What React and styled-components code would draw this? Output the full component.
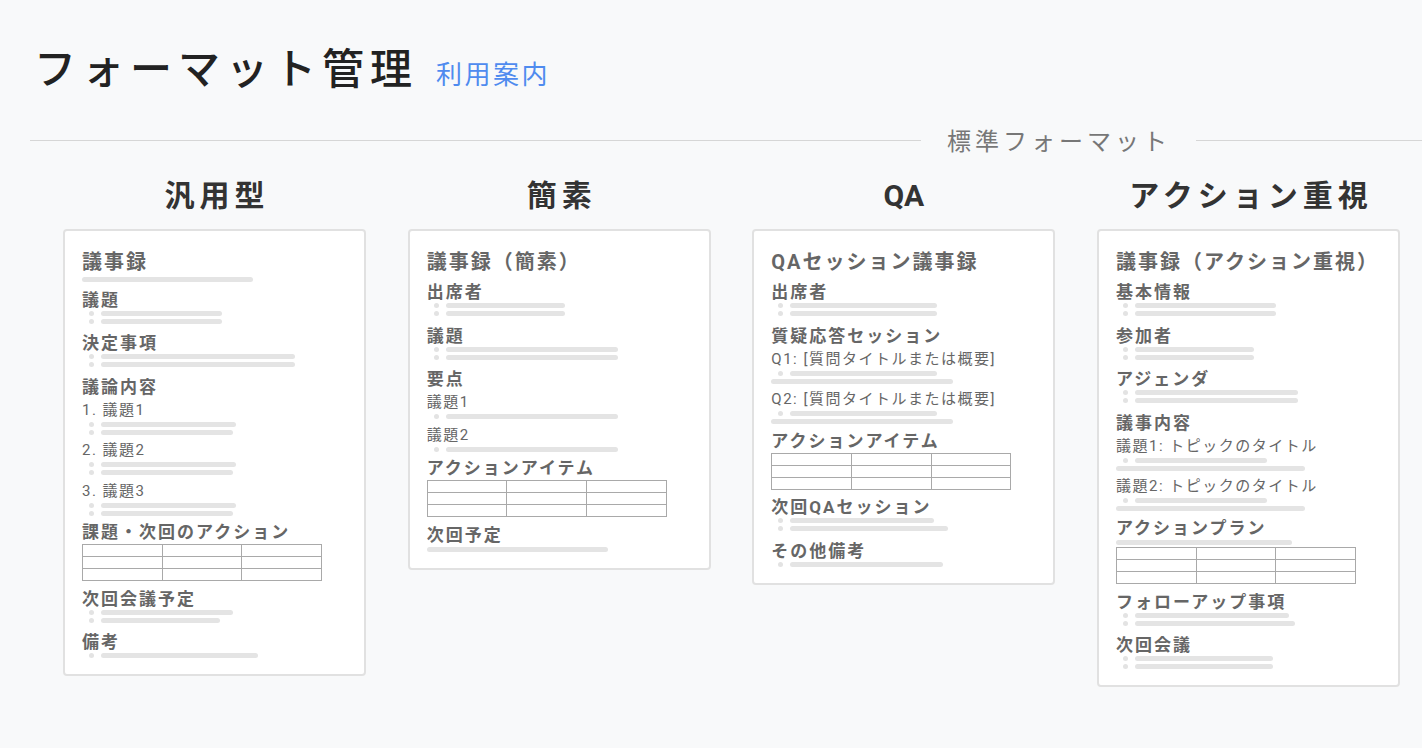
import React from "react";
import styled, { createGlobalStyle } from "styled-components";

const GlobalStyle = createGlobalStyle`
  html, body {
    margin: 0;
    padding: 0;
    background: #f8f9fa;
  }
  body {
    font-family: Roboto, "Noto Sans CJK JP", sans-serif;
    color: #222;
  }
  * {
    box-sizing: border-box;
  }
`;

const Page = styled.div`
  width: 1422px;
  height: 748px;
  overflow: hidden;
  padding-top: 41px;
`;

const TitleRow = styled.div`
  display: flex;
  align-items: baseline;
  gap: 18px;
  padding-left: 34px;
`;

const PageTitle = styled.h1`
  margin: 0;
  font-family: "Noto Sans CJK JP", sans-serif;
  font-size: 42px;
  line-height: 50px;
  font-weight: 500;
  letter-spacing: 6px;
  color: #222;
`;

const HelpLink = styled.a`
  font-family: "Noto Sans CJK JP", sans-serif;
  font-size: 26px;
  letter-spacing: 2.5px;
  color: #4f8bef;
  text-decoration: none;
  cursor: pointer;
`;

const Divider = styled.div`
  display: flex;
  align-items: center;
  margin-top: 34px;
  padding-left: 30px;
`;

const Rule = styled.div`
  height: 1px;
  background: #d6d6d6;
  flex: ${(p) => (p.$fixed ? "none" : "1")};
  width: ${(p) => (p.$fixed ? `${p.$fixed}px` : "auto")};
`;

const DividerLabel = styled.span`
  font-family: "Noto Sans CJK JP", sans-serif;
  font-size: 24px;
  line-height: 30px;
  letter-spacing: 4px;
  color: #777;
  padding: 0 25px 0 26px;
`;

const Columns = styled.div`
  display: grid;
  grid-template-columns: repeat(4, 303px);
  column-gap: 41.67px;
  align-items: start;
  margin-top: 23px;
  padding-left: 63px;
`;

const Column = styled.section`
  display: flex;
  flex-direction: column;
`;

const ColumnTitle = styled.h2`
  margin: 0 0 14.5px;
  padding-left: ${(p) => (p.$latin ? 0 : 5)}px;
  font-size: 30px;
  line-height: 36px;
  font-weight: 700;
  letter-spacing: ${(p) => (p.$latin ? 0 : 5)}px;
  text-align: center;
  color: #333;
`;

const Card = styled.div`
  background: #fff;
  border: 2px solid #e1e1e1;
  border-radius: 4px;
  padding: 18px 17px 16px;
`;

const CardTitle = styled.h3`
  margin: 0 0 ${(p) => (p.$withBar ? "2.7px" : "6.5px")};
  font-size: 20px;
  line-height: 26px;
  font-weight: 700;
  letter-spacing: 2px;
  color: #666;
  white-space: nowrap;
`;

const Block = styled.div`
  margin-bottom: ${(p) => p.$gap}px;
  &:last-child {
    margin-bottom: 0;
  }
`;

const Heading = styled.h4`
  margin: 0;
  font-size: 17px;
  line-height: 22px;
  font-weight: 700;
  letter-spacing: 2px;
  color: #666;
  white-space: nowrap;
`;

const SubText = styled.div`
  margin-top: ${(p) => (p.$first ? 2 : 5.5)}px;
  font-size: 15px;
  line-height: 20px;
  letter-spacing: 1.5px;
  color: #666;
  white-space: nowrap;
`;

const BarList = styled.ul`
  list-style: none;
  margin: ${(p) => p.$top || 0}px 0 ${(p) => p.$bottom || 0}px;
  padding: 0;
  display: flex;
  flex-direction: column;
  gap: 3px;
`;

const BarItem = styled.li`
  display: flex;
  align-items: center;
  gap: 7px;
  height: 5px;
  padding-left: ${(p) => (p.$plain ? 0 : 7)}px;
`;

const Dot = styled.span`
  width: 5px;
  height: 5px;
  border-radius: 50%;
  background: #e3e3e3;
  flex: none;
`;

const Bar = styled.span`
  height: 5px;
  border-radius: 3px;
  background: #e4e4e4;
  flex: none;
`;

const ActionTable = styled.div`
  display: grid;
  grid-template-columns: repeat(3, 1fr);
  grid-auto-rows: 12px;
  width: 240px;
  margin-top: ${(p) => p.$top}px;
  border-top: 1px solid #a9a9a9;
  border-left: 1px solid #a9a9a9;
`;

const Cell = styled.div`
  border-right: 1px solid #a9a9a9;
  border-bottom: 1px solid #a9a9a9;
`;

const formats = [
  {
    name: "汎用型",
    title: "議事録",
    titleBar: 171,
    sections: [
      { heading: "議題", bars: [121, 121] },
      { heading: "決定事項", bars: [194, 194] },
      {
        heading: "議論内容",
        subs: [
          { text: "1. 議題1", bars: [135, 132] },
          { text: "2. 議題2", bars: [135, 132] },
          { text: "3. 議題3", bars: [135, 132] },
        ],
      },
      { heading: "課題・次回のアクション", table: true },
      { heading: "次回会議予定", bars: [132, 119] },
      { heading: "備考", bars: [157] },
    ],
  },
  {
    name: "簡素",
    title: "議事録（簡素）",
    sections: [
      { heading: "出席者", bars: [119, 119] },
      { heading: "議題", bars: [172, 172] },
      {
        heading: "要点",
        subs: [
          { text: "議題1", bars: [172] },
          { text: "議題2", bars: [172] },
        ],
      },
      { heading: "アクションアイテム", table: true },
      { heading: "次回予定", lead: 181 },
    ],
  },
  {
    name: "QA",
    title: "QAセッション議事録",
    sections: [
      { heading: "出席者", bars: [147, 147] },
      {
        heading: "質疑応答セッション",
        subs: [
          { text: "Q1: [質問タイトルまたは概要]", bars: [147], plain: 182 },
          { text: "Q2: [質問タイトルまたは概要]", bars: [147], plain: 182 },
        ],
      },
      { heading: "アクションアイテム", table: true },
      { heading: "次回QAセッション", bars: [144, 158] },
      { heading: "その他備考", bars: [153] },
    ],
  },
  {
    name: "アクション重視",
    title: "議事録（アクション重視）",
    sections: [
      { heading: "基本情報", bars: [141, 141] },
      { heading: "参加者", bars: [119, 119] },
      { heading: "アジェンダ", bars: [163, 163] },
      {
        heading: "議事内容",
        subs: [
          { text: "議題1: トピックのタイトル", bars: [132], plain: 189 },
          { text: "議題2: トピックのタイトル", bars: [132], plain: 189 },
        ],
      },
      { heading: "アクションプラン", lead: 176, table: true },
      { heading: "フォローアップ事項", bars: [154, 160] },
      { heading: "次回会議", bars: [138, 138] },
    ],
  },
];

function Bullets({ bars, plain, top, bottom }) {
  return (
    <BarList $top={top} $bottom={bottom}>
      {bars.map((w, i) => (
        <BarItem key={i}>
          <Dot />
          <Bar style={{ width: w }} />
        </BarItem>
      ))}
      {plain && (
        <BarItem $plain>
          <Bar style={{ width: plain }} />
        </BarItem>
      )}
    </BarList>
  );
}

function Table({ top }) {
  return (
    <ActionTable $top={top}>
      {Array.from({ length: 9 }).map((_, i) => (
        <Cell key={i} />
      ))}
    </ActionTable>
  );
}

function Section({ section }) {
  const { heading, bars, subs, table, lead } = section;
  const gap = table ? 6.5 : subs ? 5.5 : 8.5;
  return (
    <Block $gap={gap}>
      <Heading>{heading}</Heading>
      {lead && (
        <BarList $top={1} $bottom={table ? 2.5 : 0}>
          <BarItem $plain>
            <Bar style={{ width: lead }} />
          </BarItem>
        </BarList>
      )}
      {bars && <Bullets bars={bars} />}
      {subs &&
        subs.map((s, i) => (
          <div key={i}>
            <SubText $first={i === 0}>{s.text}</SubText>
            <Bullets bars={s.bars} plain={s.plain} top={2} />
          </div>
        ))}
      {table && <Table top={lead ? 0 : 1} />}
    </Block>
  );
}

function FormatCard({ format }) {
  const latin = /^[\x20-\x7E]+$/.test(format.name);
  return (
    <Column>
      <ColumnTitle $latin={latin}>{format.name}</ColumnTitle>
      <Card>
        <CardTitle $withBar={!!format.titleBar}>{format.title}</CardTitle>
        {format.titleBar && (
          <BarList $bottom={6.8}>
            <BarItem $plain>
              <Bar style={{ width: format.titleBar }} />
            </BarItem>
          </BarList>
        )}
        {format.sections.map((s, i) => (
          <Section key={i} section={s} />
        ))}
      </Card>
    </Column>
  );
}

export default function App() {
  return (
    <>
      <GlobalStyle />
      <Page>
        <TitleRow>
          <PageTitle>フォーマット管理</PageTitle>
          <HelpLink>利用案内</HelpLink>
        </TitleRow>
        <Divider>
          <Rule />
          <DividerLabel>標準フォーマット</DividerLabel>
          <Rule $fixed={226} />
        </Divider>
        <Columns>
          {formats.map((f) => (
            <FormatCard key={f.name} format={f} />
          ))}
        </Columns>
      </Page>
    </>
  );
}
